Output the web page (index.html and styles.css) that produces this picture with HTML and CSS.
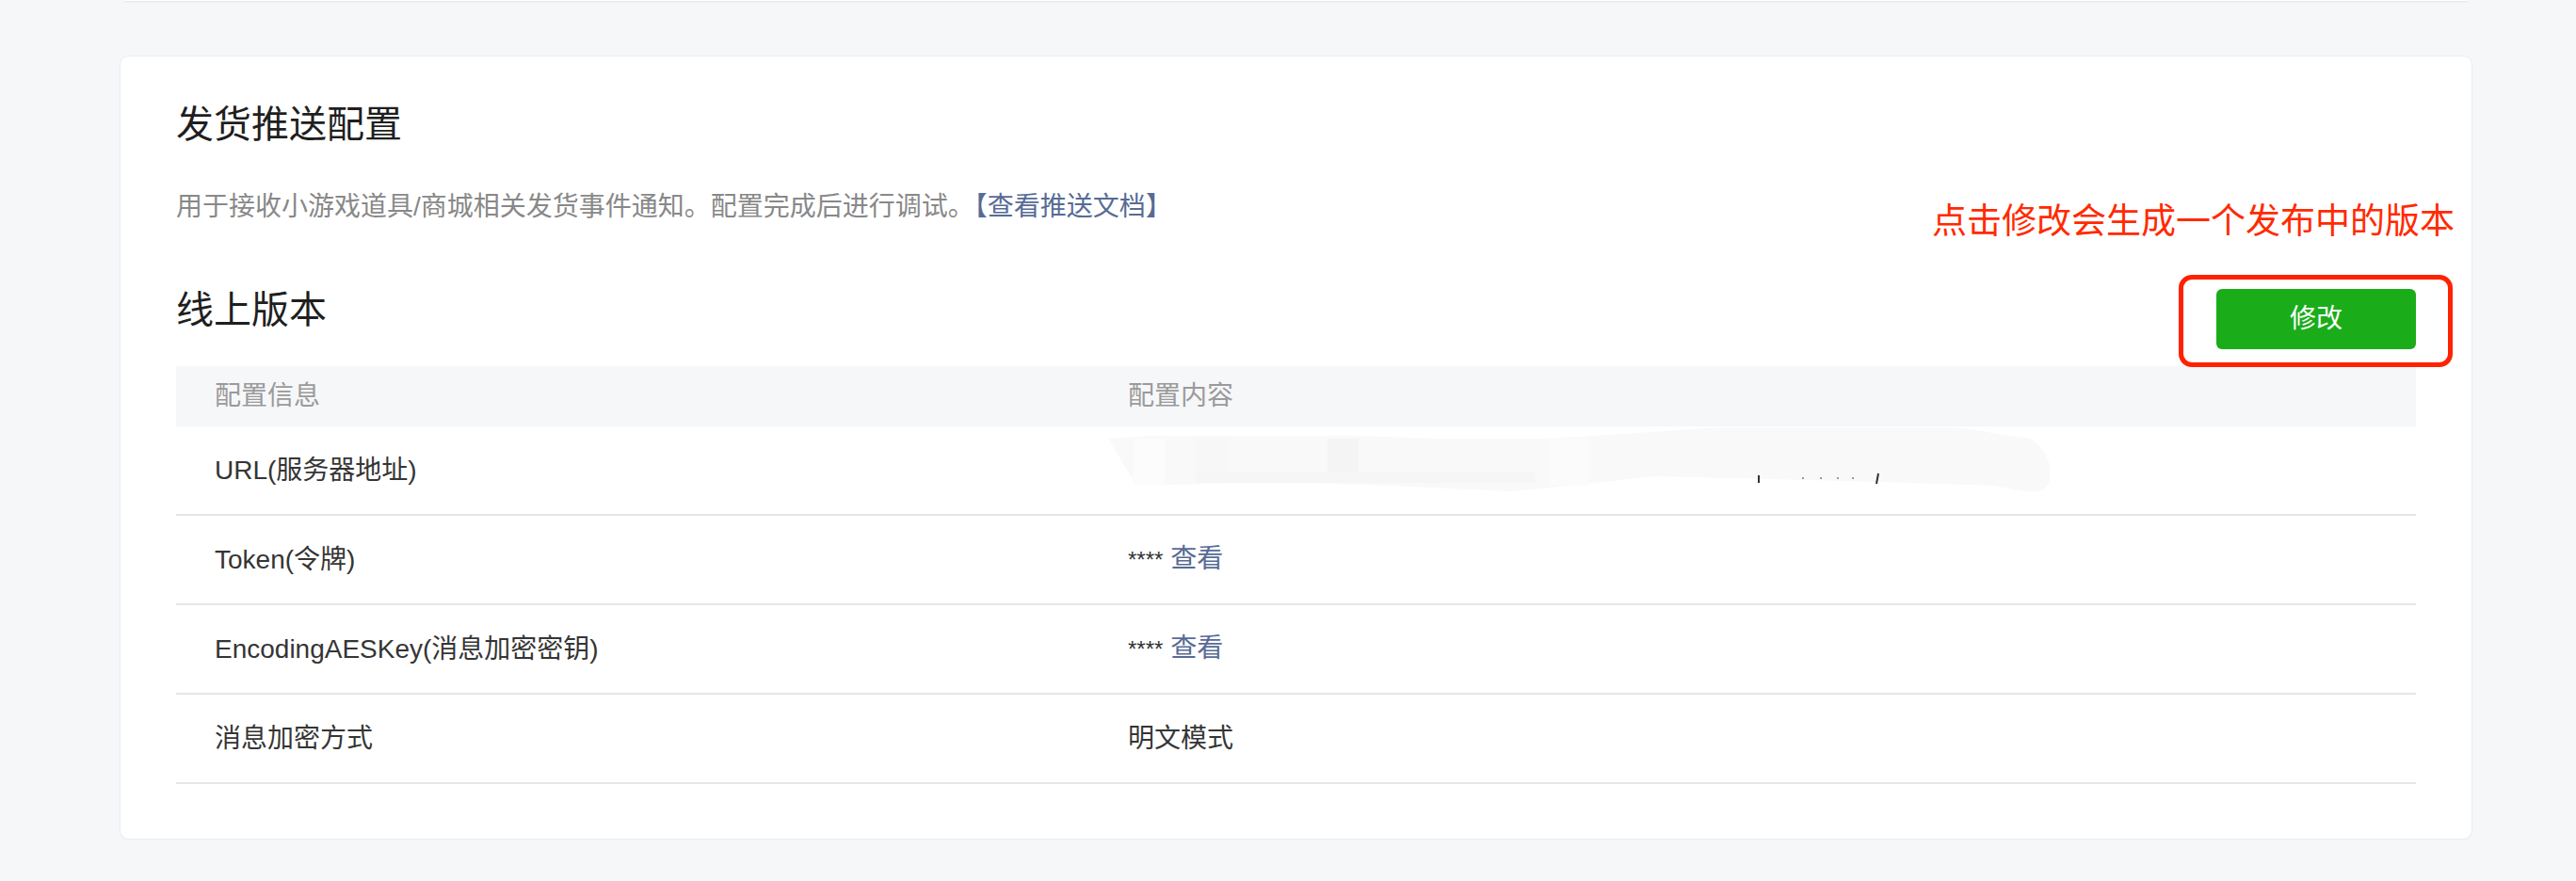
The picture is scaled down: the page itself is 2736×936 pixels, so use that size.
FILE: index.html
```html
<!DOCTYPE html>
<html lang="zh-CN">
<head>
<meta charset="utf-8">
<title>发货推送配置</title>
<link rel="stylesheet" href="styles.css">
</head>
<body>
<div class="page">
  <div class="prev-card"></div>
  <section class="card">
    <h2 class="card-title">发货推送配置</h2>
    <p class="card-desc">用于接收小游戏道具/商城相关发货事件通知。配置完成后进行调试。<a class="link" href="#">【查看推送文档】</a></p>
    <div class="section-head">
      <h3 class="section-title">线上版本</h3>
      <button class="btn-primary" type="button">修改</button>
      <div class="annot-text">点击修改会生成一个发布中的版本</div>
      <div class="annot-box"></div>
    </div>
    <div class="config-table">
      <div class="tr th">
        <div class="td">配置信息</div>
        <div class="td">配置内容</div>
      </div>
      <div class="tr">
        <div class="td">URL(服务器地址)</div>
        <div class="td td-redacted">
          <svg class="redacted" width="1000" height="72" viewBox="0 0 1000 72" aria-hidden="true">
            <path d="M0 12 L47 9 L268 9 L348 12 L470 12 L650 0 L900 0 L980 12 Q1005 30 1000 58 Q995 70 975 68 L940 62 L820 58 L580 52 L470 64 L430 68 L300 62 L180 58 L30 62 Z" fill="#f9f9fa"/>
            <rect x="27" y="12" width="33" height="50" fill="#fcfcfc"/>
            <rect x="93" y="12" width="34" height="46" fill="#f7f7f8"/>
            <rect x="233" y="12" width="33" height="35" fill="#f4f4f5"/>
            <rect x="93" y="47" width="360" height="12" fill="#f6f6f7"/>
            <rect x="470" y="12" width="40" height="50" fill="#fbfbfb"/>
            <rect x="690" y="51" width="2" height="8" fill="#333"/>
            <rect x="737" y="53" width="2" height="2" fill="#999"/>
            <rect x="756" y="53" width="2" height="2" fill="#999"/>
            <rect x="774" y="53" width="2" height="2" fill="#999"/>
            <rect x="790" y="53" width="2" height="2" fill="#999"/>
            <path d="M818 49 L816 60" stroke="#333" stroke-width="2"/>
          </svg>
        </div>
      </div>
      <div class="tr">
        <div class="td">Token(令牌)</div>
        <div class="td"><span class="stars">****</span> <a class="link" href="#">查看</a></div>
      </div>
      <div class="tr">
        <div class="td">EncodingAESKey(消息加密密钥)</div>
        <div class="td"><span class="stars">****</span> <a class="link" href="#">查看</a></div>
      </div>
      <div class="tr">
        <div class="td">消息加密方式</div>
        <div class="td">明文模式</div>
      </div>
    </div>
  </section>
</div>
</body>
</html>
```

FILE: styles.css
```css
html, body {
  margin: 0;
  padding: 0;
}

body {
  background: #f6f7f9;
  font-family: "Liberation Sans", "Noto Sans CJK SC", sans-serif;
  color: #353535;
}

.page {
  width: 2499px;
  padding-left: 127px;
}

.prev-card {
  height: 1px;
  margin: 0 4px;
  background: #ffffff;
  border-bottom: 1px solid #e9eaee;
  border-radius: 0 0 8px 8px;
  box-shadow: 0 1px 2px rgba(0, 0, 0, 0.04);
}

.card {
  margin-top: 57px;
  background: #ffffff;
  border: 1px solid #eceef1;
  border-radius: 10px;
  box-shadow: 0 1px 2px rgba(0, 0, 0, 0.03);
  padding: 44px 59px 58px 59px;
}

.card-title {
  margin: 0;
  font-size: 40px;
  line-height: 56px;
  font-weight: normal;
  color: #1f1f1f;
}

.card-desc {
  margin: 40px 0 0 0;
  font-size: 28px;
  line-height: 40px;
  color: #888888;
}

.link {
  color: #576b95;
  text-decoration: none;
}

.section-head {
  position: relative;
  margin-top: 58px;
  margin-bottom: 18px;
  display: flex;
  justify-content: space-between;
  align-items: flex-start;
}

.section-title {
  margin: 3px 0 0 0;
  font-size: 40px;
  line-height: 56px;
  font-weight: normal;
  color: #1f1f1f;
}

.btn-primary {
  margin-top: 9px;
  width: 212px;
  height: 64px;
  border: none;
  border-radius: 6px;
  background: #1aad19;
  color: #ffffff;
  font-family: "Liberation Sans", "Noto Sans CJK SC", sans-serif;
  font-size: 28px;
  line-height: 64px;
  padding: 0;
}

.annot-text {
  position: absolute;
  right: -41px;
  top: -87px;
  font-size: 37px;
  line-height: 50px;
  color: #ff2a00;
  white-space: nowrap;
}

.annot-box {
  position: absolute;
  right: -39px;
  top: -6px;
  width: 291px;
  height: 98px;
  box-sizing: border-box;
  border: 5px solid #ff2200;
  border-radius: 14px;
}

.config-table {
  font-size: 28px;
}

.tr {
  display: grid;
  grid-template-columns: 970px 1fr;
  height: 93px;
  border-bottom: 2px solid #e6e6eb;
  align-items: center;
}

.tr.th {
  height: 64px;
  border-bottom: none;
  background: #f6f7f9;
  color: #9a9a9a;
}

.td {
  padding-left: 41px;
  line-height: 40px;
  white-space: nowrap;
}

.td-redacted {
  align-self: start;
  padding-top: 1px;
  height: 72px;
}

.redacted {
  display: block;
  margin-left: -21px;
}

.stars {
  color: #353535;
  font-size: 24px;
}
```
